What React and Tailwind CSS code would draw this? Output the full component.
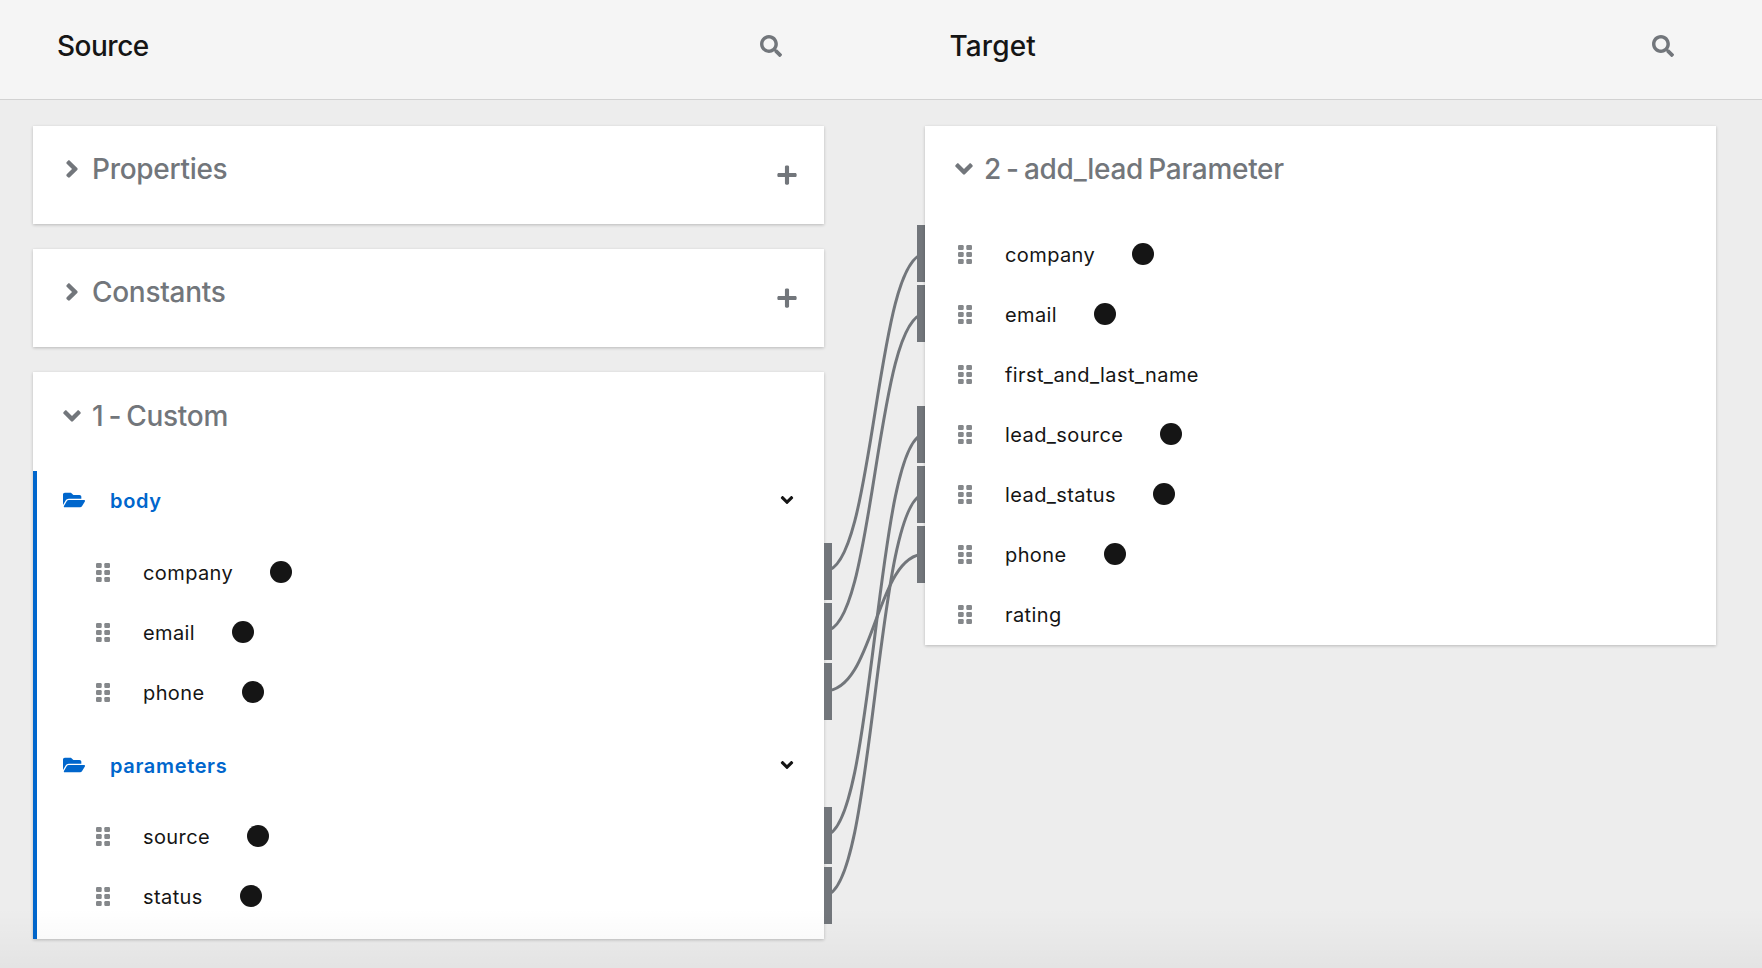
import React from "react";
import { FaSearch, FaAngleDown, FaAngleRight, FaPlus, FaFolderOpen } from "react-icons/fa";

function Grip() {
  return (
    <svg width="14" height="19" viewBox="0 0 14 19" className="shrink-0 text-[#85888b]" fill="currentColor">
      {[0, 7, 14].map((y) => (
        <g key={y}>
          <rect x="0" y={y} width="5.7" height="5" rx="1.2" />
          <rect x="8.3" y={y} width="5.7" height="5" rx="1.2" />
        </g>
      ))}
    </svg>
  );
}

function Row({ name, mapped, indent }) {
  return (
    <div className={`flex h-[60px] items-center ${indent}`}>
      <Grip />
      <span className="ml-[33px] pt-[2px] text-[20px] leading-none tracking-[0.4px] text-[#151515]">{name}</span>
      {mapped && <span className="ml-[37px] h-[22px] w-[22px] rounded-full bg-[#151515]" />}
    </div>
  );
}

function Title({ open, children, height, top = "mt-[29px]" }) {
  const Icon = open ? FaAngleDown : FaAngleRight;
  return (
    <div className={`flex items-start pl-[25px] ${height}`}>
      <div className={`flex h-[28px] items-center ${top}`}>
        <Icon className="h-[28px] w-[28px] text-[#72767b]" />
        <span className="ml-[6px] text-[28px] leading-none font-medium tracking-[-0.3px] [word-spacing:-2px] text-[#72767b]">
          {children}
        </span>
      </div>
    </div>
  );
}

function Collapsed({ name }) {
  return (
    <div className="relative h-[98px] bg-white shadow-[0_1px_3px_rgba(0,0,0,0.22)]">
      <Title height="h-[98px]">{name}</Title>
      <FaPlus className="absolute top-[38px] right-[26px] h-[22px] w-[22px] text-[#72767b]" />
    </div>
  );
}

function Group({ name, rows, gap, pb }) {
  return (
    <div className={pb}>
      <div className={`flex h-[58px] items-center pr-[27px] pl-[26px] ${gap}`}>
        <FaFolderOpen className="h-[20px] w-[22px] text-[#0066cc]" />
        <span className="ml-[25px] flex-1 pt-[1px] text-[20px] leading-none font-semibold tracking-[0.65px] text-[#0066cc]">
          {name}
        </span>
        <FaAngleDown className="h-[20px] w-[20px] text-[#151515]" />
      </div>
      {rows.map((r) => (
        <Row key={r} name={r} mapped indent="pl-[59px]" />
      ))}
    </div>
  );
}

const sourceBars = [543, 603, 663, 807, 867];
const targetBars = [225, 285, 406, 466, 526];
const links = [
  [571, 254],
  [631, 314],
  [691, 554],
  [835, 434],
  [895, 494],
];

function Connectors() {
  // drawing coordinates: x from the source card's right edge, y as on the page
  return (
    <svg width="101" height="842" viewBox="-1 126 101 842" className="block shrink-0">
      {links.map(([a, b], i) => (
        <path key={i} d={`M0 ${a} C50 ${a} 50 ${b} 100 ${b}`} fill="none" stroke="#72767b" strokeWidth="3" />
      ))}
      {sourceBars.map((y) => (
        <rect key={y} x="-1" y={y} width="8" height="57" fill="#72767b" />
      ))}
      {targetBars.map((y) => (
        <rect key={y} x="92" y={y} width="8" height="57" fill="#72767b" />
      ))}
    </svg>
  );
}

export default function App() {
  return (
    <div
      className="relative flex h-[968px] w-[1762px] flex-col overflow-hidden bg-[#ededed]"
      style={{ fontFamily: '"Inter", "Noto Sans", sans-serif' }}
    >
      <header className="flex h-[100px] shrink-0 items-center gap-[168px] border-b border-[#d2d2d2] bg-[#f5f5f5] pr-[88px] pb-[8px] pl-[57px]">
        <div className="flex flex-1 items-center justify-between">
          <span className="text-[28px] leading-none font-medium tracking-[-0.5px] text-[#151515]">Source</span>
          <FaSearch className="h-[22px] w-[22px] text-[#72767b]" />
        </div>
        <div className="flex flex-1 items-center justify-between">
          <span className="text-[28px] leading-none font-medium tracking-[0.1px] text-[#151515]">Target</span>
          <FaSearch className="h-[22px] w-[22px] text-[#72767b]" />
        </div>
      </header>

      <main className="flex flex-1 pt-[26px] pl-[33px]">
        <section className="flex w-[791px] shrink-0 flex-col gap-[25px]">
          <Collapsed name="Properties" />
          <Collapsed name="Constants" />
          <div className="bg-white shadow-[0_1px_3px_rgba(0,0,0,0.22)]">
            <Title open height="h-[99px]" top="mt-[30px]">1 - Custom</Title>
            <div className="border-l-4 border-[#0066cc]">
              <Group name="body" rows={["company", "email", "phone"]} gap="mb-[13px]" pb="pb-[14px]" />
              <Group name="parameters" rows={["source", "status"]} gap="mb-[12px]" pb="pb-[13px]" />
            </div>
          </div>
        </section>

        <Connectors />

        <section className="w-[791px] shrink-0 self-start bg-white shadow-[0_1px_3px_rgba(0,0,0,0.22)]">
          <Title open height="h-[98px]">2 - add_lead Parameter</Title>
          <div className="pb-[1px]">
            {[
              ["company", true],
              ["email", true],
              ["first_and_last_name", false],
              ["lead_source", true],
              ["lead_status", true],
              ["phone", true],
              ["rating", false],
            ].map(([n, m]) => (
              <Row key={n} name={n} mapped={m} indent="pl-[33px]" />
            ))}
          </div>
        </section>
      </main>

      <div className="pointer-events-none absolute right-0 bottom-0 left-0 h-[60px] bg-gradient-to-b from-transparent to-[rgba(0,0,0,0.04)]" />
    </div>
  );
}
